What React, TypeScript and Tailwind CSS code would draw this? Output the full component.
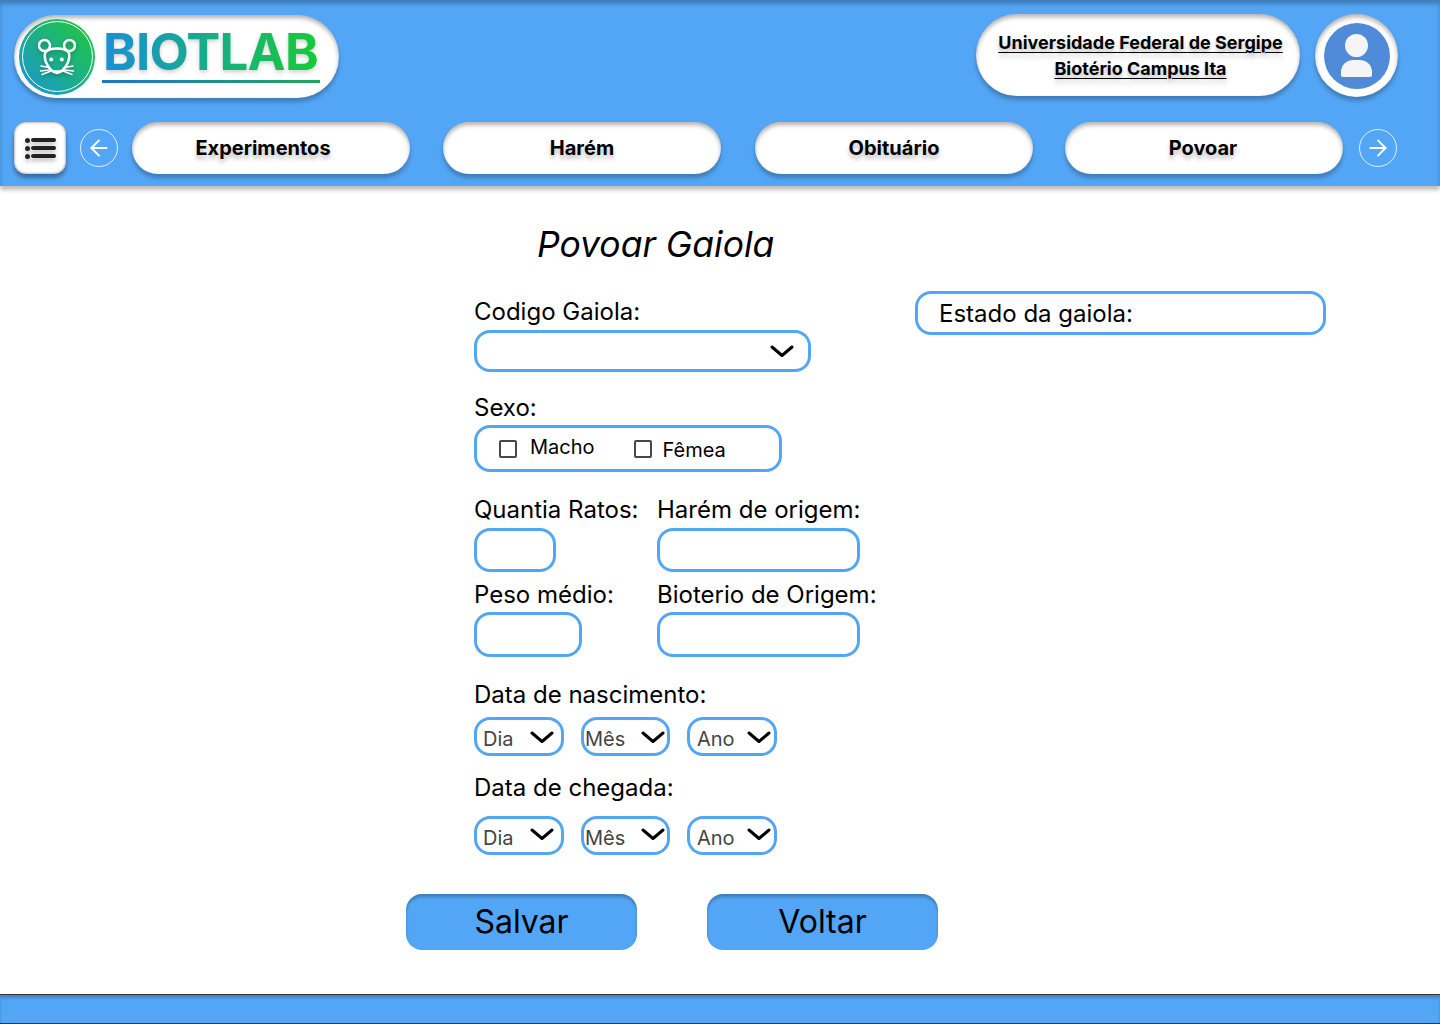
import { ArrowLeft, ArrowRight } from "lucide-react";

const navItems = [
  { label: "Experimentos", className: "pr-[16px]" },
  { label: "Harém", className: "ml-[33px]" },
  { label: "Obituário", className: "ml-[34px]" },
  { label: "Povoar", className: "ml-[32px] pr-[2px]" },
];

function Chevron({ className = "" }: { className?: string }) {
  return (
    <svg viewBox="0 0 24 13" className={`w-[24px] h-[13px] ${className}`} fill="none">
      <path d="M2 2l10 8.5L22 2" stroke="#000" strokeWidth="3" strokeLinecap="round" strokeLinejoin="round" />
    </svg>
  );
}

function MouseLogo() {
  return (
    <div className="w-[76px] h-[76px] rounded-full bg-linear-to-tr/srgb from-[#1a94d6] to-[#1fcb35] flex items-center justify-center shrink-0">
      <div className="w-[71px] h-[71px] rounded-full border-[1.5px] border-white flex items-center justify-center">
        <svg viewBox="0 0 38 38" className="w-[38px] h-[38px] drop-shadow-[0_2px_2px_rgba(0,0,0,0.25)]" fill="none" stroke="#fff" strokeWidth="2.5" strokeLinecap="round">
          <circle cx="6.500" cy="7.500" r="5.500" />
          <circle cx="31.500" cy="7.500" r="5.500" />
          <path d="M7 15c2-3 6-4.500 12-4.500s10 1.500 12 4.500c1 5-1 10-3 13-2.500 4-5.500 6.500-9 6.500s-6.500-2.500-9-6.500c-2-3-4-8-3-13z" />
          <circle cx="13.200" cy="21.500" r="2" fill="#fff" stroke="none" />
          <circle cx="23.800" cy="21.500" r="2" fill="#fff" stroke="none" />
          <path d="M16.500 33h5L19 35.500z" fill="#fff" strokeWidth="1.500" />
          <path d="M11 29.500L3 28M11 32L2.500 33M13 33L4 36.500M27 29.500l8-1.500M27 32l8.500 1M25 33l9 3.500" strokeWidth="1.500" />
        </svg>
      </div>
    </div>
  );
}

function NavCircle({ children }: { children: React.ReactNode }) {
  return (
    <div className="w-[38px] h-[38px] rounded-full border border-white/80 flex items-center justify-center text-white shrink-0">
      {children}
    </div>
  );
}

function DateSelect({ className, label, textClass, chevronClass }: { className: string; label: string; textClass: string; chevronClass: string }) {
  return (
    <div className={`${className} h-full border-[3px] border-[#53a6f5] rounded-[16px] flex items-center justify-between`}>
      <span className={`text-[20px] leading-[24px] text-[#444] mt-[5px] ${textClass}`}>{label}</span>
      <Chevron className={chevronClass} />
    </div>
  );
}

function DateRow({ heightClass, chevronClass }: { heightClass: string; chevronClass: string }) {
  return (
    <div className={`flex ${heightClass}`}>
      <DateSelect className="w-[90px] pr-[7px]" label="Dia" textClass="pl-[6px]" chevronClass={chevronClass} />
      <DateSelect className="w-[89px] ml-[17px] pr-[2px]" label="Mês" textClass="pl-[1px]" chevronClass={chevronClass} />
      <DateSelect className="w-[90px] ml-[17px] pr-[3px]" label="Ano" textClass="pl-[7px]" chevronClass={chevronClass} />
    </div>
  );
}

function FieldLabel({ children, className = "" }: { children: React.ReactNode; className?: string }) {
  return <label className={`block text-[24px] leading-[29px] text-black ${className}`}>{children}</label>;
}

function Input({ className = "" }: { className?: string }) {
  return <div className={`border-[3px] border-[#53a6f5] rounded-[16px] ${className}`} />;
}

export default function App() {
  const raised = "shadow-[0_4px_4px_rgba(0,0,0,0.25),inset_0_3px_4px_rgba(0,0,0,0.3)]";
  const softText = "[text-shadow:0_4px_4px_rgba(0,0,0,0.25)]";

  return (
    <div className="w-[1440px] h-[1024px] bg-white overflow-hidden flex flex-col font-['Inter',sans-serif]">
      <header className="h-[186px] bg-[#53a6f5] shrink-0 shadow-[0_4px_4px_rgba(0,0,0,0.25),inset_0_4px_4px_rgba(0,0,0,0.25)] pt-[14px] z-10">
        <div className="flex items-start h-[84px] pl-[14px] pr-[42px]">
          <div className={`w-[325px] h-[83px] mt-[1px] bg-white rounded-full ${raised} flex items-center pl-[5px]`}>
            <MouseLogo />
            <div className="ml-[7px] w-[218px]">
              <div className="text-[51px] leading-[56px] font-bold tracking-[-0.8px] pl-[1px] whitespace-nowrap bg-linear-to-r/srgb from-[#1a8fd6] to-[#16cb36] bg-clip-text text-transparent mt-[-6px] drop-shadow-[0_2px_2px_rgba(0,0,0,0.2)]">
                BIOTLAB
              </div>
              <div className="h-[3px] bg-linear-to-r/srgb from-[#1a78c9] to-[#1fa85a]" />
            </div>
          </div>
          <div className={`ml-auto w-[324px] h-[82px] bg-white rounded-full ${raised} flex flex-col items-center justify-center pl-[5px] pt-[2px]`}>
            <span className={`text-[18px] leading-[26px] font-bold underline underline-offset-[3px] decoration-1 text-black ${softText}`}>
              Universidade Federal de Sergipe
            </span>
            <span className={`text-[18px] leading-[26px] font-bold underline underline-offset-[3px] decoration-1 text-black ${softText}`}>
              Biotério Campus Ita
            </span>
          </div>
          <div className={`ml-[15px] w-[83px] h-[83px] bg-white rounded-full ${raised} flex items-center justify-center`}>
            <div className="w-[66px] h-[66px] rounded-full bg-[#4f8bd8] flex flex-col items-center justify-center">
              <div className="w-[23px] h-[23px] rounded-full bg-[#f5f5f5]" />
              <div className="w-[31px] h-[17px] mt-[3px] rounded-t-[12px] rounded-b-[2px] bg-[#f5f5f5]" />
            </div>
          </div>
        </div>

        <nav className="flex items-center h-[52px] mt-[24px] pl-[14px]">
          <div className="w-[52px] h-[52px] bg-white rounded-[12px] shadow-[0_4px_4px_rgba(0,0,0,0.35),inset_0_0_3px_rgba(0,0,0,0.55)] flex flex-col items-center justify-center gap-[3px]">
            {[0, 1, 2].map((i) => (
              <div key={i} className="flex items-center gap-[1px] drop-shadow-[0_3px_2px_rgba(0,0,0,0.25)]">
                <div className="w-[5px] h-[5px] rounded-full bg-[#222]" />
                <div className="w-[25px] h-[4px] rounded-full bg-[#222]" />
              </div>
            ))}
          </div>
          <div className="ml-[14px]">
            <NavCircle>
              <ArrowLeft size={26} strokeWidth={1.75} />
            </NavCircle>
          </div>
          <div className="ml-[14px] flex">
            {navItems.map((item) => (
              <button
                key={item.label}
                className={`w-[278px] h-[52px] bg-white rounded-full ${raised} text-[20px] font-bold text-black ${softText} ${item.className}`}
              >
                {item.label}
              </button>
            ))}
          </div>
          <div className="ml-[16px]">
            <NavCircle>
              <ArrowRight size={26} strokeWidth={1.75} />
            </NavCircle>
          </div>
        </nav>
      </header>

      <main className="flex-1 flex flex-col pt-[37px] pl-[474px]">
        <h1 className="text-[35.5px] leading-[44px] italic font-normal text-black pl-[63px]">Povoar Gaiola</h1>

        <div className="flex mt-[25px]">
          <div className="w-[441px]">
            <FieldLabel className="mt-[5px]">Codigo Gaiola:</FieldLabel>
            <div className="w-[337px] h-[42px] mt-[4px] border-[3px] border-[#53a6f5] rounded-[16px] flex items-center justify-end pr-[14px]">
              <Chevron />
            </div>
          </div>
          <div className="w-[411px] h-[44px] mt-[-1px] border-[3px] border-[#53a6f5] rounded-[16px] flex items-center pl-[21px]">
            <span className="text-[24px] leading-[29px] mt-[1px] text-black">Estado da gaiola:</span>
          </div>
        </div>

        <FieldLabel className="mt-[21px]">Sexo:</FieldLabel>
        <div className="w-[308px] h-[47px] mt-[3px] border-[3px] border-[#53a6f5] rounded-[16px] flex items-center pl-[22px]">
          <div className="w-[18px] h-[18px] border-2 border-[#49454f] rounded-[2px]" />
          <span className="ml-[13px] text-[20px] leading-[24px] mb-[3px] text-black">Macho</span>
          <div className="ml-[39px] w-[18px] h-[18px] border-2 border-[#49454f] rounded-[2px]" />
          <span className="ml-[11px] text-[20px] leading-[24px] mt-[3px] text-black">Fêmea</span>
        </div>

        <div className="grid grid-cols-[183px_auto] justify-start mt-[23px]">
          <div>
            <FieldLabel>Quantia Ratos:</FieldLabel>
            <Input className="w-[82px] h-[44px] mt-[4px]" />
          </div>
          <div>
            <FieldLabel>Harém de origem:</FieldLabel>
            <Input className="w-[203px] h-[44px] mt-[4px]" />
          </div>
          <div className="mt-[8px]">
            <FieldLabel>Peso médio:</FieldLabel>
            <Input className="w-[108px] h-[45px] mt-[3px]" />
          </div>
          <div className="mt-[8px]">
            <FieldLabel>Bioterio de Origem:</FieldLabel>
            <Input className="w-[203px] h-[45px] mt-[3px]" />
          </div>
        </div>

        <FieldLabel className="mt-[23px]">Data de nascimento:</FieldLabel>
        <div className="mt-[8px]">
          <DateRow heightClass="h-[39px]" chevronClass="mt-[2px]" />
        </div>
        <FieldLabel className="mt-[17px]">Data de chegada:</FieldLabel>
        <div className="mt-[14px]">
          <DateRow heightClass="h-[39px]" chevronClass="mt-[-2px]" />
        </div>

        <div className="flex mt-[39px] ml-[-68px]">
          <button className="w-[231px] h-[56px] pb-[2px] bg-[#53a6f5] rounded-[16px] text-[32px] leading-[39px] text-black shadow-[inset_0_3px_3px_rgba(0,0,0,0.25)]">
            Salvar
          </button>
          <button className="ml-[70px] w-[231px] h-[56px] pb-[2px] bg-[#53a6f5] rounded-[16px] text-[32px] leading-[39px] text-black shadow-[inset_0_3px_3px_rgba(0,0,0,0.25)]">
            Voltar
          </button>
        </div>
      </main>

      <footer className="h-[30px] shrink-0 bg-[#53a6f5] border-y border-[#333] shadow-[inset_0_3px_3px_rgba(0,0,0,0.2)]" />
    </div>
  );
}
